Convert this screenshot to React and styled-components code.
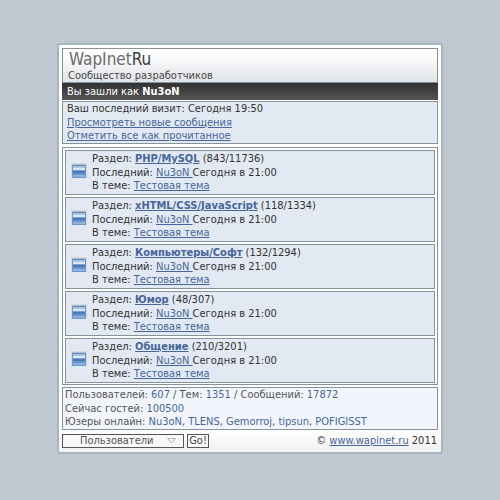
import React from 'react';
import styled, { createGlobalStyle } from 'styled-components';

const GlobalStyle = createGlobalStyle`
  * {
    box-sizing: border-box;
  }

  body {
    margin: 0;
    background: #bfc7d0;
    color: #333333;
    font-family: "DejaVu Sans Condensed", "DejaVu Sans", sans-serif;
    font-size: 11px;
    line-height: 14px;
  }
`;

const Page = styled.main`
  min-height: 100vh;
  padding: 43px 57px 46px;
`;

const Frame = styled.div`
  border: 2px solid #a7b5bd;
  border-radius: 3px;
  padding: 3px;
  background: linear-gradient(#ffffff 95%, #eff1f2 100%);
`;

const Header = styled.header`
  height: 35px;
  padding: 1px 5px 0;
  border: 1px solid #87939b;
  background: linear-gradient(#ffffff 10%, #e0e4e8 100%);
  color: #484848;
`;

const Logo = styled.h1`
  margin: 0;
  font-size: 17px;
  font-weight: 400;
  line-height: 19px;
  padding-left: 1px;
  color: #6b6b6b;
`;

const LogoEnd = styled.span`
  color: #3c3c3c;
`;

const Slogan = styled.p`
  margin: 0;
  line-height: 13px;
`;

const LoginBar = styled.div`
  height: 17px;
  padding: 0 5px;
  line-height: 18px;
  background: linear-gradient(#323232, #555555);
  color: #ffffff;
`;

const Panel = styled.section`
  margin-top: ${(props) => props.$gap}px;
  padding: 0 ${(props) => props.$side}px;
  border: 1px solid #87939b;
  background: ${(props) => props.$background};
  color: ${(props) => props.$color || '#333333'};
`;

const Line = styled.div`
  line-height: 14px;

  &:last-child {
    padding-bottom: 1px;
    line-height: 12px;
  }
`;

const Link = styled.a`
  color: #46669b;
  text-decoration: underline;
  text-decoration-thickness: 1px;
  text-underline-offset: 1px;
`;

const PlainLink = styled.a`
  color: #46669b;
  text-decoration: none;
`;

const ForumList = styled.section`
  display: grid;
  gap: 2px;
  margin-top: 3px;
  padding: 2px 2px 1px;
  border: 1px solid #87939b;
`;

const ForumItem = styled.article`
  display: flex;
  align-items: flex-start;
  gap: 5px;
  padding: 1px 5px;
  border: 1px solid #87939b;
  background: #e2e9f2;
`;

const Icon = styled.svg`
  flex: none;
  margin-top: 11px;
`;

const Footer = styled.footer`
  display: flex;
  align-items: center;
  gap: 3px;
  margin-top: 4px;
  padding-bottom: 1px;
`;

const SelectWrap = styled.label`
  position: relative;
  display: block;
  width: 122px;
`;

const Select = styled.select`
  display: block;
  width: 100%;
  height: 14px;
  padding: 0 0 0 17px;
  appearance: none;
  border: 1px solid #555555;
  border-radius: 0;
  background: #f7f8f9;
  color: #555555;
  font: inherit;
  line-height: 12px;
`;

const Arrow = styled.svg`
  position: absolute;
  top: 4px;
  right: 8px;
  pointer-events: none;
`;

const GoButton = styled.button`
  width: 22px;
  height: 14px;
  padding: 0;
  border: 1px solid #555555;
  background: #f7f8f9;
  color: #444444;
  font: inherit;
  line-height: 12px;
`;

const Copyright = styled.div`
  margin-left: auto;
  padding-right: 1px;
`;

const forums = [
  { name: 'PHP/MySQL', count: '843/11736' },
  { name: 'xHTML/CSS/JavaScript', count: '118/1334' },
  { name: 'Компьютеры/Софт', count: '132/1294' },
  { name: 'Юмор', count: '48/307' },
  { name: 'Общение', count: '210/3201' },
];

const users = ['Nu3oN', 'TLENS', 'Gemorroj', 'tipsun', 'POFIGISST'];

const ForumIcon = () => (
  <Icon width="16" height="16" viewBox="0 0 16 16" shapeRendering="crispEdges" aria-hidden="true">
    <rect width="16" height="15" fill="#d3d9e0" />
    <rect x="1" y="1" width="14" height="1" fill="#b4bfcb" />
    <rect x="1" y="2" width="14" height="13" fill="#6f98c9" />
    <rect x="2" y="2" width="12" height="1" fill="#5d86b5" />
    <rect x="2" y="3" width="12" height="2" fill="#a8c5e2" />
    <rect x="2" y="5" width="12" height="2" fill="#dbe9f6" />
    <rect x="2" y="7" width="12" height="1" fill="#7ba1cd" />
    <rect x="2" y="8" width="12" height="2" fill="#4c7ab4" />
    <rect x="2" y="10" width="12" height="2" fill="#6593cc" />
    <rect x="2" y="12" width="12" height="2" fill="#8db3e0" />
  </Icon>
);

const App = () => {
  return (
    <Page>
      <GlobalStyle />
      <Frame>
        <Header>
          <Logo>WapInet<LogoEnd>Ru</LogoEnd></Logo>
          <Slogan>Сообщество разработчиков</Slogan>
        </Header>
        <LoginBar>Вы зашли как <b>Nu3oN</b></LoginBar>

        <Panel $gap={1} $side={4} $background="#e2e9f2">
          <Line>Ваш последний визит: Сегодня 19:50</Line>
          <Line><Link href="#new">Просмотреть новые сообщения</Link></Line>
          <Line><Link href="#read">Отметить все как прочитанное</Link></Line>
        </Panel>

        <ForumList>
          {forums.map((forum) => (
            <ForumItem key={forum.name}>
              <ForumIcon />
              <div>
                <Line>Раздел: <Link href="#forum"><b>{forum.name}</b></Link> ({forum.count})</Line>
                <Line>Последний: <Link href="#user">Nu3oN </Link>Сегодня в 21:00</Line>
                <Line>В теме: <Link href="#topic">Тестовая тема</Link></Line>
              </div>
            </ForumItem>
          ))}
        </ForumList>

        <Panel $gap={2} $side={2} $background="#f2f6fc" $color="#555555">
          <Line>
            Пользователей: <PlainLink href="#users">607</PlainLink> / Тем: <PlainLink href="#topics">1351</PlainLink> / Сообщений: <PlainLink href="#posts">17872</PlainLink>
          </Line>
          <Line>Сейчас гостей: <PlainLink href="#guests">100500</PlainLink></Line>
          <Line>
            Юзеры онлайн: {users.map((user, i) => (
              <React.Fragment key={user}>
                {i > 0 && ', '}
                <PlainLink href="#user">{user}</PlainLink>
              </React.Fragment>
            ))}
          </Line>
        </Panel>

        <Footer>
          <SelectWrap>
            <Select aria-label="Раздел сайта">
              <option>Пользователи</option>
            </Select>
            <Arrow width="9" height="6" viewBox="0 0 9 6" aria-hidden="true">
              <path d="M0.5 0.5H8.5L4.5 5Z" fill="#f4f4f4" stroke="#b5b5b5" />
            </Arrow>
          </SelectWrap>
          <GoButton type="button">Go!</GoButton>
          <Copyright>© <Link href="#wapinet">www.wapinet.ru</Link> 2011</Copyright>
        </Footer>
      </Frame>
    </Page>
  );
};

export default App;
